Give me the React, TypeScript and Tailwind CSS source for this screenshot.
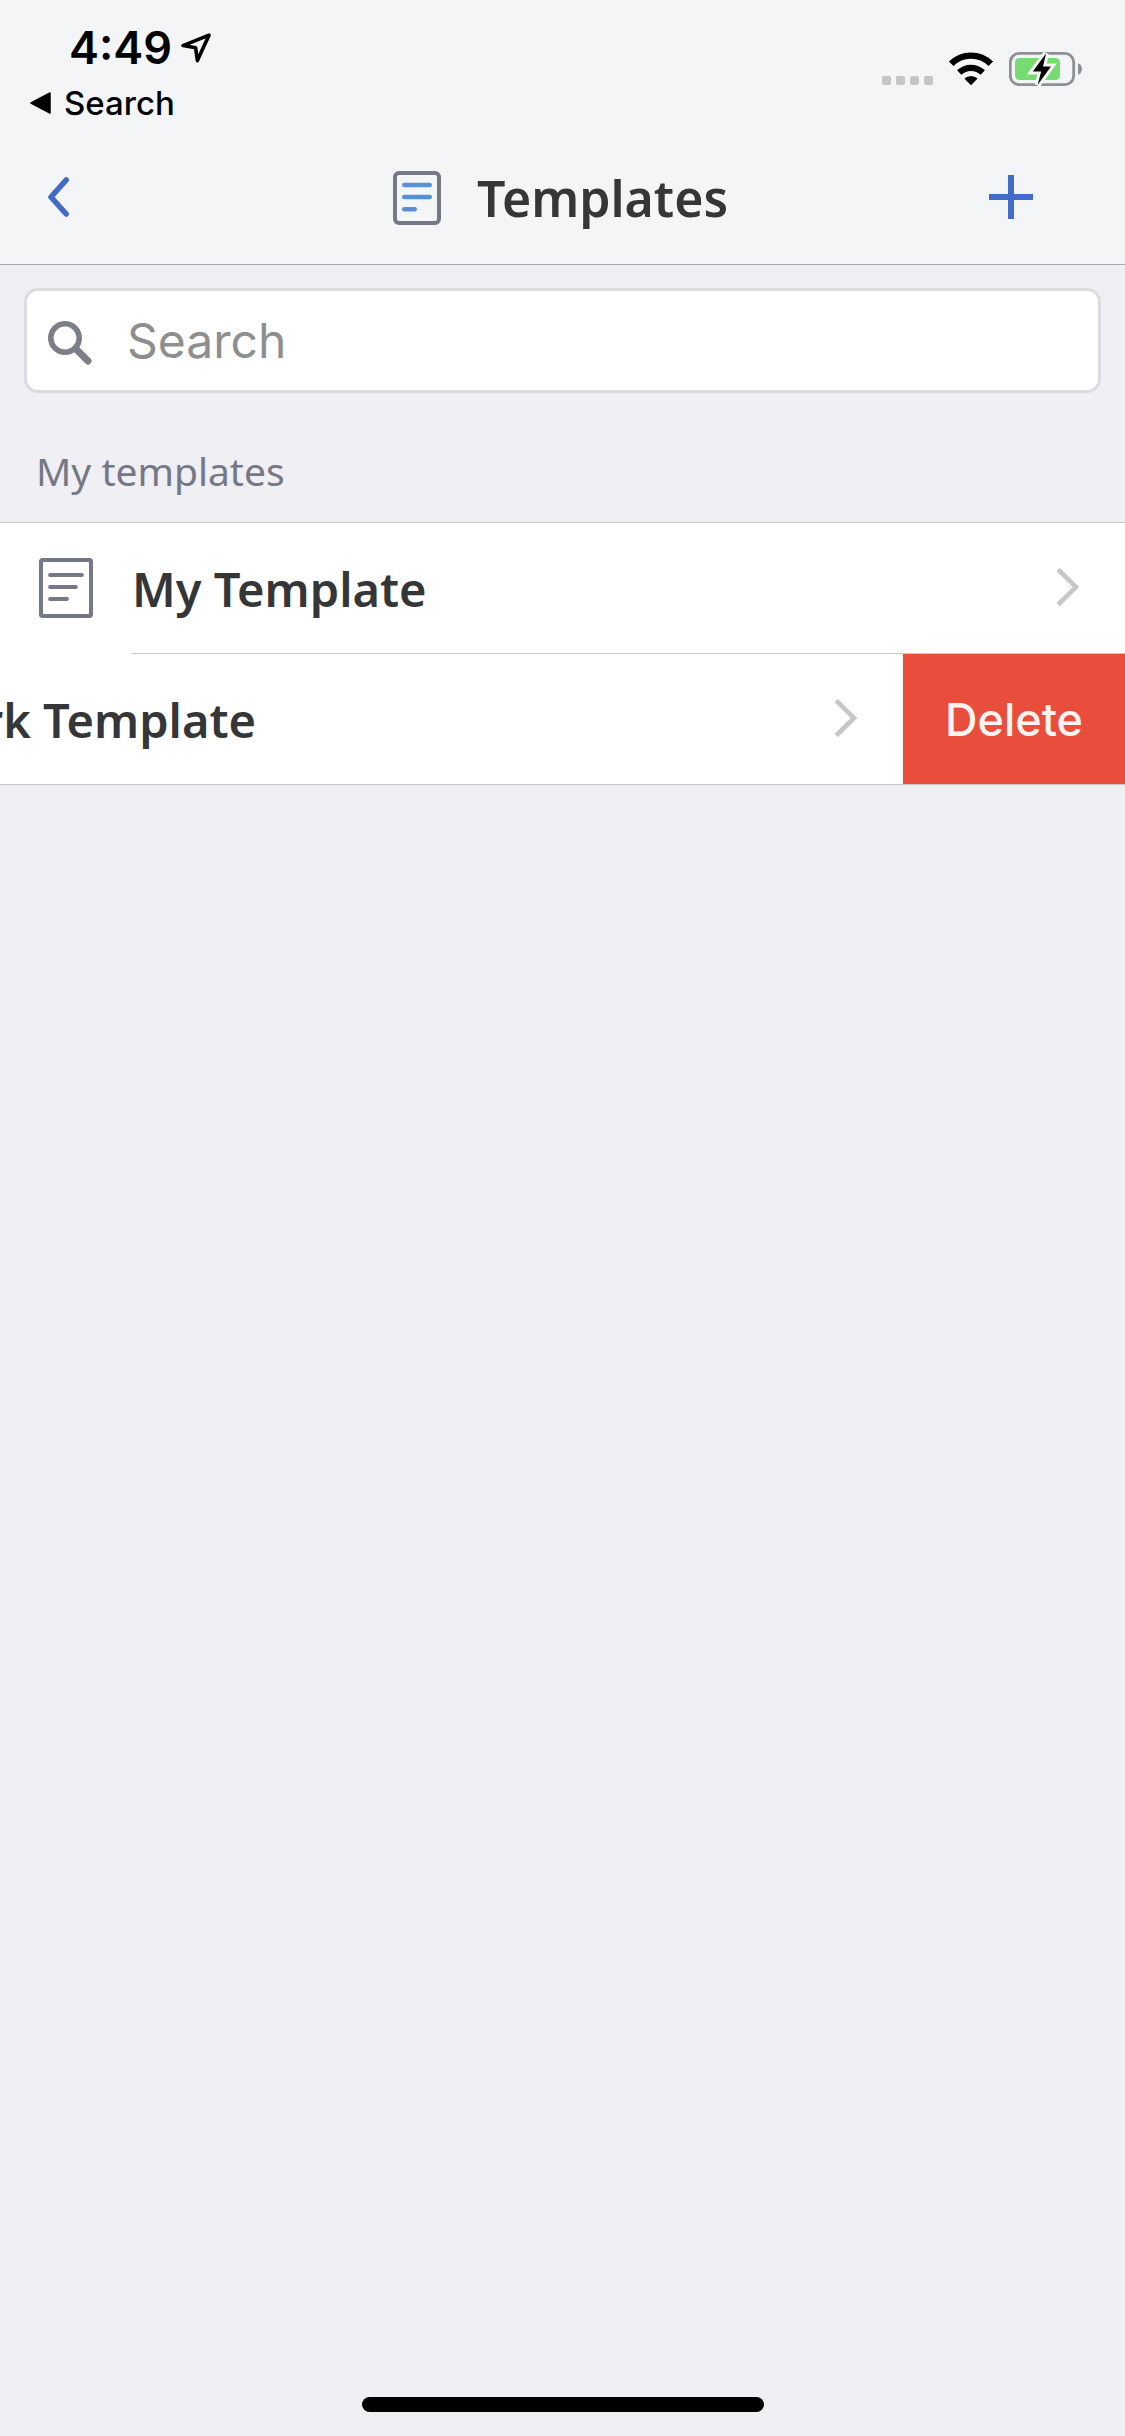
import React from "react";

const sf = "font-[Inter,sans-serif]";

function LocationArrow() {
  return (
    <svg width="32" height="32" viewBox="0 0 32 32" fill="none" aria-hidden="true">
      <path d="M29 3.2 3 13.6 15.6 15.8 17.4 28.6Z" stroke="#000" strokeWidth="3.6" strokeLinejoin="round" />
    </svg>
  );
}

function Wifi() {
  return (
    <svg width="46" height="34" viewBox="0 0 46 34" aria-hidden="true">
      <path d="M3.2 11.8a28 28 0 0 1 39.6 0" fill="none" stroke="#000" strokeWidth="6.4" />
      <path d="M11.2 20.6a17 17 0 0 1 23.6 0" fill="none" stroke="#000" strokeWidth="6.2" />
      <path d="M16.4 26.6a9.6 9.6 0 0 1 13.2 0L23 33.2Z" fill="#000" />
    </svg>
  );
}

function Battery() {
  return (
    <svg width="74" height="40" viewBox="0 0 74 40" aria-hidden="true">
      <rect x="1.3" y="4.3" width="63.4" height="31.4" rx="9" fill="none" stroke="#8f9093" strokeWidth="2.8" />
      <path d="M69 14.2c2.6 0.8 4 3.3 4 5.8s-1.4 5-4 5.8Z" fill="#8f9093" />
      <rect x="6" y="9" width="45" height="22" rx="4.5" fill="#76dc72" />
      <path d="M37 4.5 23.8 22.5h8.4L28.6 36 42 17.5h-8Z" fill="#000" stroke="#f3f5f7" strokeWidth="6" />
      <path d="M37 4.5 23.8 22.5h8.4L28.6 36 42 17.5h-8Z" fill="#000" />
    </svg>
  );
}

function TemplatesIcon() {
  return (
    <svg width="48" height="54" viewBox="0 0 48 54" fill="none" aria-hidden="true">
      <rect x="2" y="2" width="44" height="50" rx="4" stroke="#757887" strokeWidth="4" />
      <path d="M11.2 14h25.6M11.2 26h25.6M11.2 38.3h10.6" stroke="#5a90d4" strokeWidth="4.4" strokeLinecap="round" />
    </svg>
  );
}

function TemplateIcon() {
  return (
    <svg width="54" height="60" viewBox="0 0 54 60" fill="none" aria-hidden="true">
      <rect x="2" y="2" width="50" height="56" rx="1.5" stroke="#757887" strokeWidth="4" />
      <path d="M11.2 17h31.6M11.2 29h25.6M11.2 41h16.6" stroke="#757887" strokeWidth="4.2" strokeLinecap="round" />
    </svg>
  );
}

function Chevron() {
  return (
    <svg width="24" height="40" viewBox="0 0 24 40" fill="none" aria-hidden="true">
      <path d="M2.2 1.5 20 19 2.2 36.500" stroke="#c7c7c9" strokeWidth="4.6" />
    </svg>
  );
}

function StatusBar() {
  return (
    <div className={`flex justify-between pr-[42px] ${sf} text-black`}>
      <div className="pt-[18px]">
        <div className="flex h-[60px] items-center gap-2 pl-[69px]">
          <span className="text-[45px] leading-[60px] font-semibold">4:49</span>
          <LocationArrow />
        </div>
        <a href="#search" className="flex h-[50px] items-center gap-[13px] pl-[30px] text-[33px] leading-[50px] font-medium">
          <svg width="21" height="22" viewBox="0 0 21 22" aria-hidden="true">
            <path d="M20 1v20L1 11Z" stroke="#000" strokeWidth="1.5" strokeLinejoin="round" />
          </svg>
          Search
        </a>
      </div>
      <div className="flex h-[89px] items-end">
        <div className="mr-[15px] mb-1 flex gap-[5px]">
          {[0, 1, 2, 3].map((i) => (
            <span key={i} className="size-[9px] rounded-[2px] bg-[#c4c5c8]" />
          ))}
        </div>
        <div className="flex items-center gap-[15px]">
          <Wifi />
          <Battery />
        </div>
      </div>
    </div>
  );
}

function RowLink({ title }: { title: string }) {
  return (
    <a href="#template" className="flex h-[130px] w-full shrink-0 items-center bg-white pr-[45px] pl-[39px]">
      <TemplateIcon />
      <span className="ml-[39px] grow pt-[2px] text-[47px] leading-[64px] font-semibold whitespace-nowrap">{title}</span>
      <Chevron />
    </a>
  );
}

export default function App() {
  return (
    <div className="flex min-h-screen flex-col bg-[#efeff4] font-['Noto_Sans',sans-serif] text-[#353638]">
      <header className="border-b border-[#a9aab0] bg-[#f3f5f7]">
        <StatusBar />
        <div className="grid h-[136px] grid-cols-[1fr_auto_1fr] items-center px-12 pt-[2px]">
          <button type="button" aria-label="Back" className="justify-self-start">
            <svg width="21" height="40" viewBox="0 0 21 40" fill="none" aria-hidden="true">
              <path d="M18.2 3 3 20l15.2 17" stroke="#426bc8" strokeWidth="5.6" strokeLinecap="round" strokeLinejoin="round" />
            </svg>
          </button>
          <h1 className="flex items-center gap-9 pt-[2px] pr-1 text-[50px] leading-[68px] font-semibold">
            <TemplatesIcon />
            Templates
          </h1>
          <button type="button" aria-label="Add template" className="mr-11 justify-self-end">
            <svg width="44" height="44" viewBox="0 0 44 44" aria-hidden="true">
              <path d="M22 0v44M0 22h44" stroke="#426bc8" strokeWidth="6" />
            </svg>
          </button>
        </div>
      </header>

      <main className="grow">
        <label className="mx-6 mt-[23px] flex h-[105px] items-center gap-[35px] rounded-[14px] border-[3px] border-[#dcdce0] bg-white px-[21px]">
          <svg width="44" height="48" viewBox="0 -4 44 48" fill="none" aria-hidden="true" className="shrink-0">
            <circle cx="17" cy="17" r="14.2" stroke="#7c7f87" strokeWidth="5.6" />
            <path d="M28 28 40 40" stroke="#7c7f87" strokeWidth="7" strokeLinecap="round" />
          </svg>
          <input
            type="search"
            aria-label="Search"
            placeholder="Search"
            className={`min-w-0 grow bg-transparent ${sf} text-[48px] leading-[64px] outline-none placeholder:text-[#8e8e8e]`}
          />
        </label>

        <h2 className="mt-[52px] mb-[25px] pl-[36px] text-[39px] leading-[52px] font-normal text-[#757887]">My templates</h2>

        <ul className="border-y border-[#c8c7cc]">
          <li>
            <RowLink title="My Template" />
            <div className="bg-white pl-[132px]">
              <div className="h-px bg-[#c8c7cc]" />
            </div>
          </li>
          <li className="flex justify-end overflow-hidden">
            <RowLink title="Work Template" />
            <button type="button" className={`w-[222px] shrink-0 bg-[#e94d3c] pt-[2px] ${sf} text-[45px] leading-[60px] font-medium text-[#fff4f0]`}>
              Delete
            </button>
          </li>
        </ul>
      </main>

      <div className="mx-auto mb-6 h-[15px] w-[402px] rounded-full bg-black" />
    </div>
  );
}
